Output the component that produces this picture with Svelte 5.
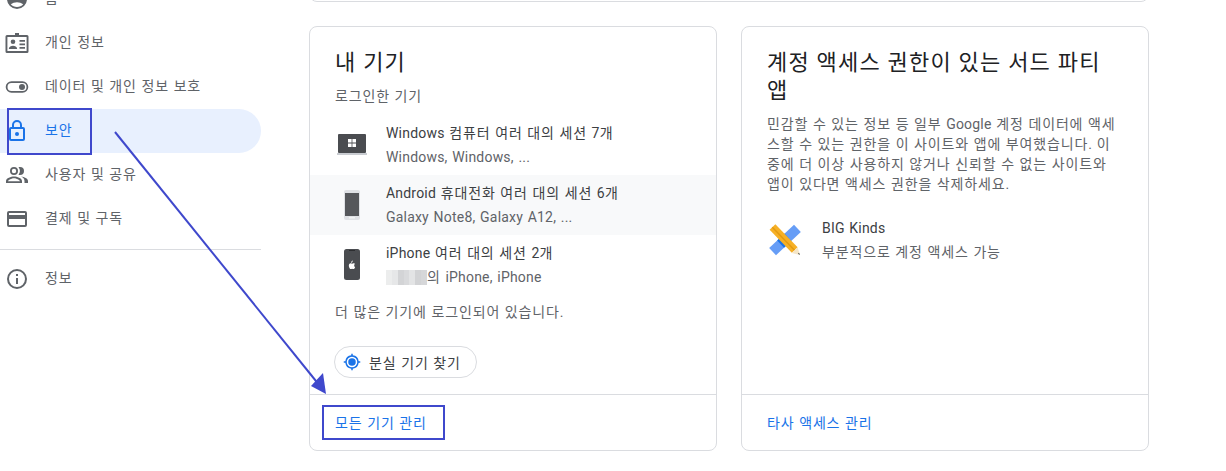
<script lang="ts">
	const navTop = [
		{ label: '개인 정보', icon: 'badge' },
		{ label: '데이터 및 개인 정보 보호', icon: 'toggle' },
		{ label: '보안', icon: 'lock', active: true },
		{ label: '사용자 및 공유', icon: 'people' },
		{ label: '결제 및 구독', icon: 'card' }
	];

	const devices = [
		{ kind: 'laptop', title: 'Windows 컴퓨터 여러 대의 세션 7개', sub: 'Windows, Windows, ...' },
		{ kind: 'android', title: 'Android 휴대전화 여러 대의 세션 6개', sub: 'Galaxy Note8, Galaxy A12, ...', shaded: true },
		{ kind: 'iphone', title: 'iPhone 여러 대의 세션 2개', sub: '의 iPhone, iPhone', blur: true }
	];

	const blurCells = ['#eceded', '#e6e7e8', '#d3d4d6', '#d9dadc', '#e3e4e5', '#d2d3d5', '#d6d7d9'];

	// hangul runs get wider tracking than latin ones
	const runs = (s: string) => s.split(/([가-힣]+)/);
</script>

{#snippet txt(s)}
	{#each runs(s) as run, i}{#if i % 2}<span class="ko">{run}</span>{:else}{run}{/if}{/each}
{/snippet}

{#snippet navIcon(name)}
	<svg class="nav-icon" viewBox="0 0 24 24" width="24" height="24" fill="currentColor">
		{#if name === 'badge'}
			<path d="M10 2h4v2h8a1.500 1.500 0 0 1 1.500 1.500v15A1.500 1.500 0 0 1 22 22H2a1.500 1.500 0 0 1-1.500-1.500v-15A1.500 1.500 0 0 1 2 4h8zM2.400 5.900v14.200h19.200V5.900z" fill-rule="evenodd"/>
			<circle cx="8" cy="10.800" r="2.300"/>
			<path d="M3.800 18c0-2.200 2.500-3.300 4.200-3.300s4.200 1.100 4.200 3.300zM14.500 9h5.500v1.700h-5.500zM14.500 12.500h5.500v1.700h-5.500zM14.500 16h5.500v1.700h-5.500z"/>
		{:else if name === 'toggle'}
			<path d="M6.500 6.200h11a5.800 5.800 0 0 1 0 11.600h-11a5.800 5.800 0 0 1 0-11.600zM6.500 8a4 4 0 0 0 0 8h11a4 4 0 0 0 0-8z" fill-rule="evenodd"/>
			<circle cx="17" cy="12" r="3"/>
		{:else if name === 'lock'}
			<path d="M18 8h-1V6a5 5 0 0 0-10 0v2H6a2 2 0 0 0-2 2v10a2 2 0 0 0 2 2h12a2 2 0 0 0 2-2V10a2 2 0 0 0-2-2zM9 6a3 3 0 0 1 6 0v2H9zm9 14H6V10h12z"/>
			<circle cx="12" cy="15" r="2"/>
		{:else if name === 'people'}
			<path d="M9 12a4 4 0 1 0 0-8 4 4 0 0 0 0 8zm0-6.200a2.200 2.200 0 1 1 0 4.400 2.200 2.200 0 0 1 0-4.400zM9 13.500c-3 0-8 1.500-8 4.500v2h16v-2c0-3-5-4.500-8-4.500zm-6 4.700c.3-1.100 3.500-2.900 6-2.900s5.700 1.800 6 2.900zM16.100 13.600c1.900 1 3.400 2.300 3.400 4.400v2H23v-2c0-2.500-3.900-4-6.900-4.400zM15 12a4 4 0 0 0 0-8c-.5 0-1 .1-1.500.3a6 6 0 0 1 0 7.400c.5.200 1 .3 1.500.3z"/>
		{:else if name === 'card'}
			<path d="M20 4H4a2 2 0 0 0-2 2v12a2 2 0 0 0 2 2h16a2 2 0 0 0 2-2V6a2 2 0 0 0-2-2zm0 14H4v-6h16zm0-10H4V6h16z"/>
		{:else if name === 'info'}
			<path d="M11 7h2v2h-2zm0 4h2v6h-2zm1-9a10 10 0 1 0 0 20 10 10 0 0 0 0-20zm0 18a8 8 0 1 1 0-16 8 8 0 0 1 0 16z"/>
		{:else}
			<path d="M12 2a10 10 0 1 0 0 20 10 10 0 0 0 0-20zm0 18c-2.500 0-4.700-1-6.200-2.700 1.700-1.300 3.900-2 6.200-2s4.500.7 6.200 2C16.700 19 14.500 20 12 20z" fill-rule="evenodd"/>
		{/if}
	</svg>
{/snippet}

{#snippet deviceIcon(kind)}
	<svg viewBox="0 0 40 40" width="40" height="40">
		{#if kind === 'laptop'}
			<rect x="6" y="9" width="28" height="19" rx="1" fill="#4a4c50"/>
			<rect x="5" y="28" width="30" height="2" fill="#c9ccd1"/>
			<path d="M16 14h3.600v3.600H16zm4.400 0H24v3.600h-3.600zM16 18.400h3.600V22H16zm4.400 0H24V22h-3.600z" fill="#fff"/>
		{:else if kind === 'android'}
			<rect x="12" y="5" width="16" height="30" rx="2" fill="#dfe1e5"/>
			<rect x="13" y="8" width="14" height="23" fill="#55575b"/>
			<rect x="17" y="32" width="6" height="1.500" fill="#f1f3f4"/>
		{:else}
			<rect x="12" y="4" width="16" height="31" rx="2.500" fill="#4a4c50"/>
			<rect x="17" y="5" width="6" height="1" fill="#2c2d30"/>
			<g transform="translate(1 .8) scale(.95)">
				<path d="M20.200 17.200c.4-.5.700-1 .6-1.600-.5.100-1 .4-1.300.9-.3.400-.5.900-.4 1.300.4 0 .8-.2 1.100-.6zM22.300 20.700c0-1 .8-1.500.9-1.500-.5-.7-1.200-.8-1.500-.8-.6-.1-1.200.4-1.600.4s-.9-.4-1.400-.4c-.7 0-1.400.4-1.700 1-.7 1.300-.2 3.100.5 4.100.4.500.8 1.100 1.300 1 .5 0 .7-.3 1.300-.3s.8.300 1.300.3c.6 0 .9-.5 1.300-1 .4-.6.500-1.100.6-1.200-.1 0-1-.4-1-1.600z" fill="#fff"/>
			</g>
		{/if}
	</svg>
{/snippet}

<div class="page">
	<nav class="side">
		<div class="nav-row">
			{@render navIcon('home')}
			<span>{@render txt('홈')}</span>
		</div>
		{#each navTop as item}
			<div class="nav-row" class:active={item.active}>
				{@render navIcon(item.icon)}
				<span>{@render txt(item.label)}</span>
			</div>
		{/each}
		<hr />
		<div class="nav-row">
			{@render navIcon('info')}
			<span>{@render txt('정보')}</span>
		</div>
	</nav>

	<main class="content">
		<div class="prev-edge"></div>
		<div class="cards">
			<section class="card">
				<div class="card-body">
					<h2>{@render txt('내 기기')}</h2>
					<p class="signed">{@render txt('로그인한 기기')}</p>
					<ul class="devices">
						{#each devices as d}
							<li class:shaded={d.shaded}>
								<div class="dev-icon">{@render deviceIcon(d.kind)}</div>
								<div>
									<div class="dev-title">{@render txt(d.title)}</div>
									<div class="dev-sub">
										{#if d.blur}<span class="blur">{#each blurCells as c}<i style:background={c}></i>{/each}</span>{/if}{@render txt(d.sub)}
									</div>
								</div>
							</li>
						{/each}
					</ul>
					<p class="more">{@render txt('더 많은 기기에 로그인되어 있습니다.')}</p>
					<div class="chip">
						<svg viewBox="0 0 24 24" width="18" height="18" fill="#1a73e8">
							<circle cx="12" cy="12" r="5"/>
							<path d="M20.900 11A9 9 0 0 0 13 3.100V1h-2v2.100A9 9 0 0 0 3.100 11H1v2h2.100A9 9 0 0 0 11 20.900V23h2v-2.100a9 9 0 0 0 7.900-7.900H23v-2zM12 19a7 7 0 1 1 0-14 7 7 0 0 1 0 14z"/>
						</svg>
						<span>{@render txt('분실 기기 찾기')}</span>
					</div>
				</div>
				<div class="card-foot">
					<span>{@render txt('모든 기기 관리')}</span>
				</div>
			</section>

			<section class="card">
				<div class="card-body">
					<h2 class="wrap">{@render txt('계정 액세스 권한이 있는 서드 파티 앱')}</h2>
					<p class="desc">{@render txt('민감할 수 있는 정보 등 일부 Google 계정 데이터에 액세스할 수 있는 권한을 이 사이트와 앱에 부여했습니다. 이 중에 더 이상 사용하지 않거나 신뢰할 수 없는 사이트와 앱이 있다면 액세스 권한을 삭제하세요.')}</p>
					<div class="app">
						<svg viewBox="0 0 32 32" width="32" height="32">
							<rect x="-1" y="11" width="34" height="10" fill="#669df6" transform="rotate(-43 16 16)"/>
							<rect x="10" y="11" width="10" height="10" fill="#1a73e8" transform="rotate(-43 16 16)"/>
							<rect x="-2" y="12" width="32" height="8" fill="#f6b026" transform="rotate(46 16 16)"/>
							<rect x="-2" y="15.500" width="32" height="1.500" fill="#e39a10" transform="rotate(46 16 16)"/>
							<polygon points="22.800,28.900 28.600,23.300 31,31" fill="#f5e6c8"/>
							<polygon points="29,29.800 30,28.800 31,31" fill="#3c4043"/>
						</svg>
						<div>
							<div class="dev-title">{@render txt('BIG Kinds')}</div>
							<div class="dev-sub">{@render txt('부분적으로 계정 액세스 가능')}</div>
						</div>
					</div>
				</div>
				<div class="card-foot">
					<span>{@render txt('타사 액세스 관리')}</span>
				</div>
			</section>
		</div>
	</main>

	<!-- annotation drawn over the screenshot -->
	<div class="mark mark-nav"></div>
	<div class="mark mark-manage"></div>
	<svg class="arrow" width="1226" height="471">
		<line x1="115" y1="132" x2="320" y2="386" stroke="#3f48cc" stroke-width="2"/>
		<polygon points="326,394 311,386 323,373" fill="#3f48cc"/>
	</svg>
</div>

<style>
	:global(body) {
		background: #fff;
	}

	.page {
		position: relative;
		display: flex;
		width: 1226px;
		height: 471px;
		overflow: hidden;
		font-family: Roboto, "Noto Sans CJK KR", sans-serif;
		font-size: 14px;
		letter-spacing: 0.2px;
		word-spacing: 1px;
		color: #3c4043;
	}

	.ko {
		letter-spacing: 0.85px;
	}

	.side {
		flex: 0 0 261px;
		margin-top: -23px;
	}

	.nav-row {
		display: flex;
		align-items: center;
		height: 44px;
		padding-left: 5px;
		gap: 16px;
		color: #5f6368;
		border-radius: 0 22px 22px 0;
	}

	.nav-row span {
		padding-bottom: 4px;
	}

	.nav-icon {
		flex: none;
	}

	.nav-row.active {
		background: #e8f0fe;
		color: #1a73e8;
	}

	.side hr {
		border: 0;
		border-top: 1px solid #dadce0;
		margin: 8px 0 7px;
	}

	.content {
		margin-left: 48px;
		width: 840px;
	}

	.prev-edge {
		box-sizing: border-box;
		height: 22px;
		margin: -20px 0 24px;
		border: 1px solid #dadce0;
		border-radius: 8px;
	}

	.cards {
		display: flex;
		gap: 24px;
	}

	.card {
		flex: 0 0 408px;
		box-sizing: border-box;
		height: 425px;
		display: flex;
		flex-direction: column;
		border: 1px solid #dadce0;
		border-radius: 8px;
	}

	.card-body {
		flex: 1;
		padding: 22px 0 0;
	}

	h2 {
		margin: 0 25px 9px;
		font-size: 22px;
		line-height: 28px;
		font-weight: 400;
		color: #202124;
	}

	h2.wrap {
		margin-right: 40px;
	}

	h2 .ko {
		letter-spacing: 1.2px;
	}

	.signed {
		margin: 0 25px 9px;
		line-height: 20px;
		color: #5f6368;
	}

	.devices {
		list-style: none;
		margin: 0;
		padding: 0;
	}

	.devices li {
		display: flex;
		align-items: center;
		height: 60px;
		padding-left: 22px;
		gap: 14px;
	}

	.devices li.shaded {
		background: #f8f9fa;
	}

	.dev-icon {
		width: 40px;
		height: 40px;
	}

	.dev-title {
		line-height: 20px;
		color: #3c4043;
	}

	.dev-sub {
		margin-top: 4px;
		line-height: 20px;
		color: #5f6368;
	}

	.blur {
		display: inline-flex;
		width: 41px;
		height: 15px;
		vertical-align: -3px;
	}

	.blur i {
		flex: 1;
	}

	.more {
		margin: 7px 25px 0;
		line-height: 20px;
		color: #5f6368;
	}

	.chip {
		display: inline-flex;
		align-items: center;
		gap: 8px;
		box-sizing: border-box;
		height: 32px;
		margin: 24px 0 0 24px;
		padding: 0 15px 0 8px;
		border: 1px solid #dadce0;
		border-radius: 16px;
		color: #3c4043;
	}

	.card-foot {
		flex: 0 0 56px;
		display: flex;
		align-items: center;
		box-sizing: border-box;
		padding: 0 0 2px 25px;
		border-top: 1px solid #dadce0;
		color: #1a73e8;
	}

	.desc {
		margin: 0 25px;
		line-height: 20px;
		color: #5f6368;
		word-break: break-all;
	}

	.app {
		display: flex;
		align-items: center;
		gap: 21px;
		margin: 24px 0 0 27px;
	}

	.mark {
		position: absolute;
		box-sizing: border-box;
		border: 2px solid #3f48cc;
	}

	.mark-nav {
		left: 7px;
		top: 108px;
		width: 85px;
		height: 47px;
	}

	.mark-manage {
		left: 322px;
		top: 405px;
		width: 123px;
		height: 35px;
	}

	.arrow {
		position: absolute;
		left: 0;
		top: 0;
		pointer-events: none;
	}
</style>
